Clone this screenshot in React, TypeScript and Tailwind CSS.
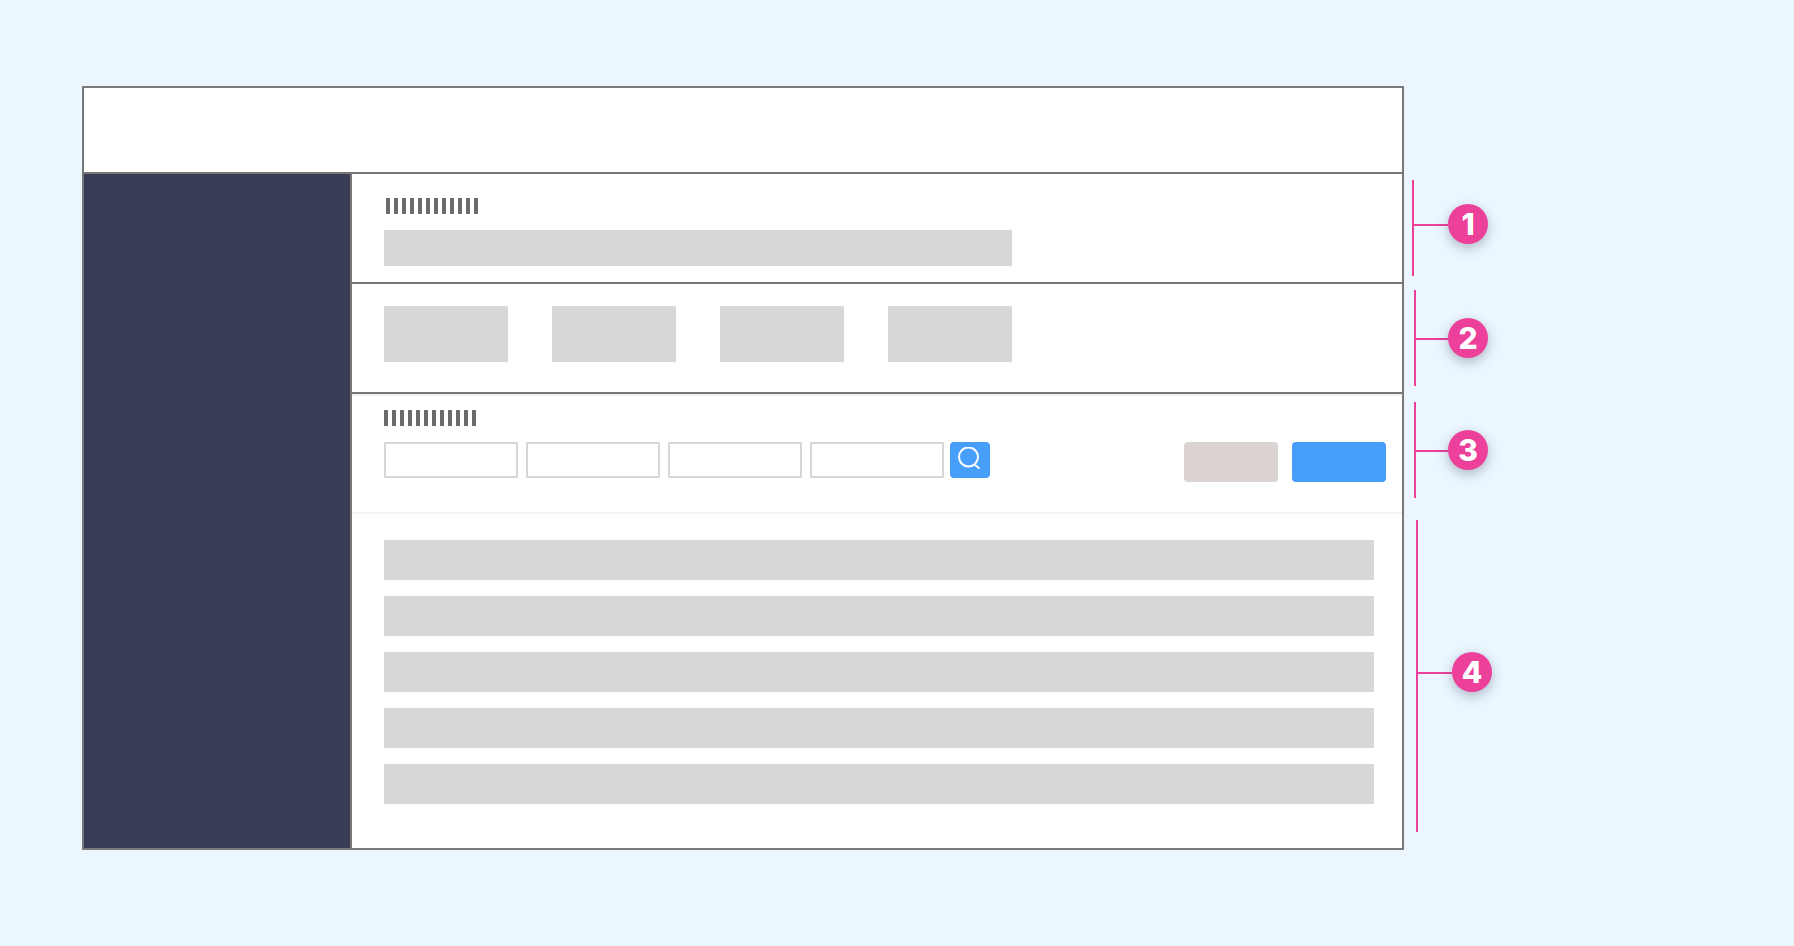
import React from 'react';

const STRIPES = Array.from({ length: 12 }, (_, i) => i);
const TABS = ['a', 'b', 'c', 'd'];
const ROWS = [1, 2, 3, 4, 5];

// Placeholder for a label, drawn as a row of thin bars
const Stripes: React.FC<{ className?: string }> = ({ className = '' }) => (
  <div className={`flex gap-[4px] ${className}`}>
    {STRIPES.map((i) => (
      <div key={i} className="h-[16px] w-[4px] bg-[#6b6b6b]" />
    ))}
  </div>
);

const Marker: React.FC<{ label: string; className: string; lineClass: string }> = ({ label, className, lineClass }) => (
  <div className={`flex items-center border-l-2 border-[#ec409b] ${className}`}>
    <div className={`mt-[2px] h-[2px] bg-[#ec409b] ${lineClass}`} />
    <div className="flex h-[40px] w-[40px] items-center justify-center rounded-full bg-[#ec409b] font-['Inter',sans-serif] text-[30px] leading-none font-extrabold text-white shadow-[0_4px_12px_rgba(60,70,90,0.35)]">
      {label}
    </div>
  </div>
);

const App: React.FC = () => {
  return (
    <div className="flex h-[946px] w-[1794px] items-start overflow-hidden bg-[#ebf6ff] pt-[86px] pl-[82px]">
      <div className="flex h-[764px] w-[1322px] flex-col border-2 border-[#787878] bg-white">
        <div className="h-[86px] shrink-0 border-b-2 border-[#787878]" />
        <div className="flex min-h-0 flex-1">
          <div className="w-[268px] shrink-0 border-r-2 border-[#787878] bg-[#383c54]" />
          <div className="flex min-w-0 flex-1 flex-col">
            {/* Section 1 */}
            <div className="h-[110px] border-b-2 border-[#787878] pt-[24px] pl-[32px]">
              <Stripes className="ml-[2px]" />
              <div className="mt-[16px] h-[36px] w-[628px] bg-[#d7d7d7]" />
            </div>

            {/* Section 2 */}
            <div className="flex h-[110px] gap-[44px] border-b-2 border-[#787878] pt-[22px] pl-[32px]">
              {TABS.map((t) => (
                <div key={t} className="h-[56px] w-[124px] bg-[#d7d7d7]" />
              ))}
            </div>

            {/* Section 3 */}
            <div className="h-[120px] border-y-2 border-[#f3f3f3] pt-[14px] pr-[16px] pl-[32px]">
              <Stripes />
              <div className="mt-[16px] flex items-start justify-between">
                <div className="flex gap-[8px]">
                  {TABS.map((t) => (
                    <div key={t} className="h-[36px] w-[134px] border-2 border-[#d7d7d7] bg-white" />
                  ))}
                  <div className="-ml-[2px] flex h-[36px] w-[40px] items-center justify-center rounded bg-[#479efb]">
                    <svg width="26" height="26" viewBox="0 0 26 26" fill="none" stroke="white" strokeWidth="2">
                      <circle cx="11.5" cy="10" r="9.5" />
                      <path d="M18 18l4.5 3.5" />
                    </svg>
                  </div>
                </div>
                <div className="flex gap-[14px]">
                  <div className="h-[40px] w-[94px] rounded bg-[#dbd2d2]" />
                  <div className="h-[40px] w-[94px] rounded bg-[#479efb]" />
                </div>
              </div>
            </div>

            {/* Section 4 */}
            <div className="flex flex-col gap-[16px] pt-[26px] pr-[28px] pl-[32px]">
              {ROWS.map((r) => (
                <div key={r} className="h-[40px] bg-[#d7d7d7]" />
              ))}
            </div>
          </div>
        </div>
      </div>

      <div className="ml-[8px] flex flex-col items-start pt-[94px]">
        <Marker label="1" className="h-[96px] pb-[8px]" lineClass="w-[34px]" />
        <Marker label="2" className="mt-[14px] ml-[2px] h-[96px]" lineClass="w-[32px]" />
        <Marker label="3" className="mt-[16px] ml-[2px] h-[96px]" lineClass="w-[32px]" />
        <Marker label="4" className="mt-[22px] ml-[4px] h-[312px] pb-[8px]" lineClass="w-[34px]" />
      </div>
    </div>
  );
};

export default App;
